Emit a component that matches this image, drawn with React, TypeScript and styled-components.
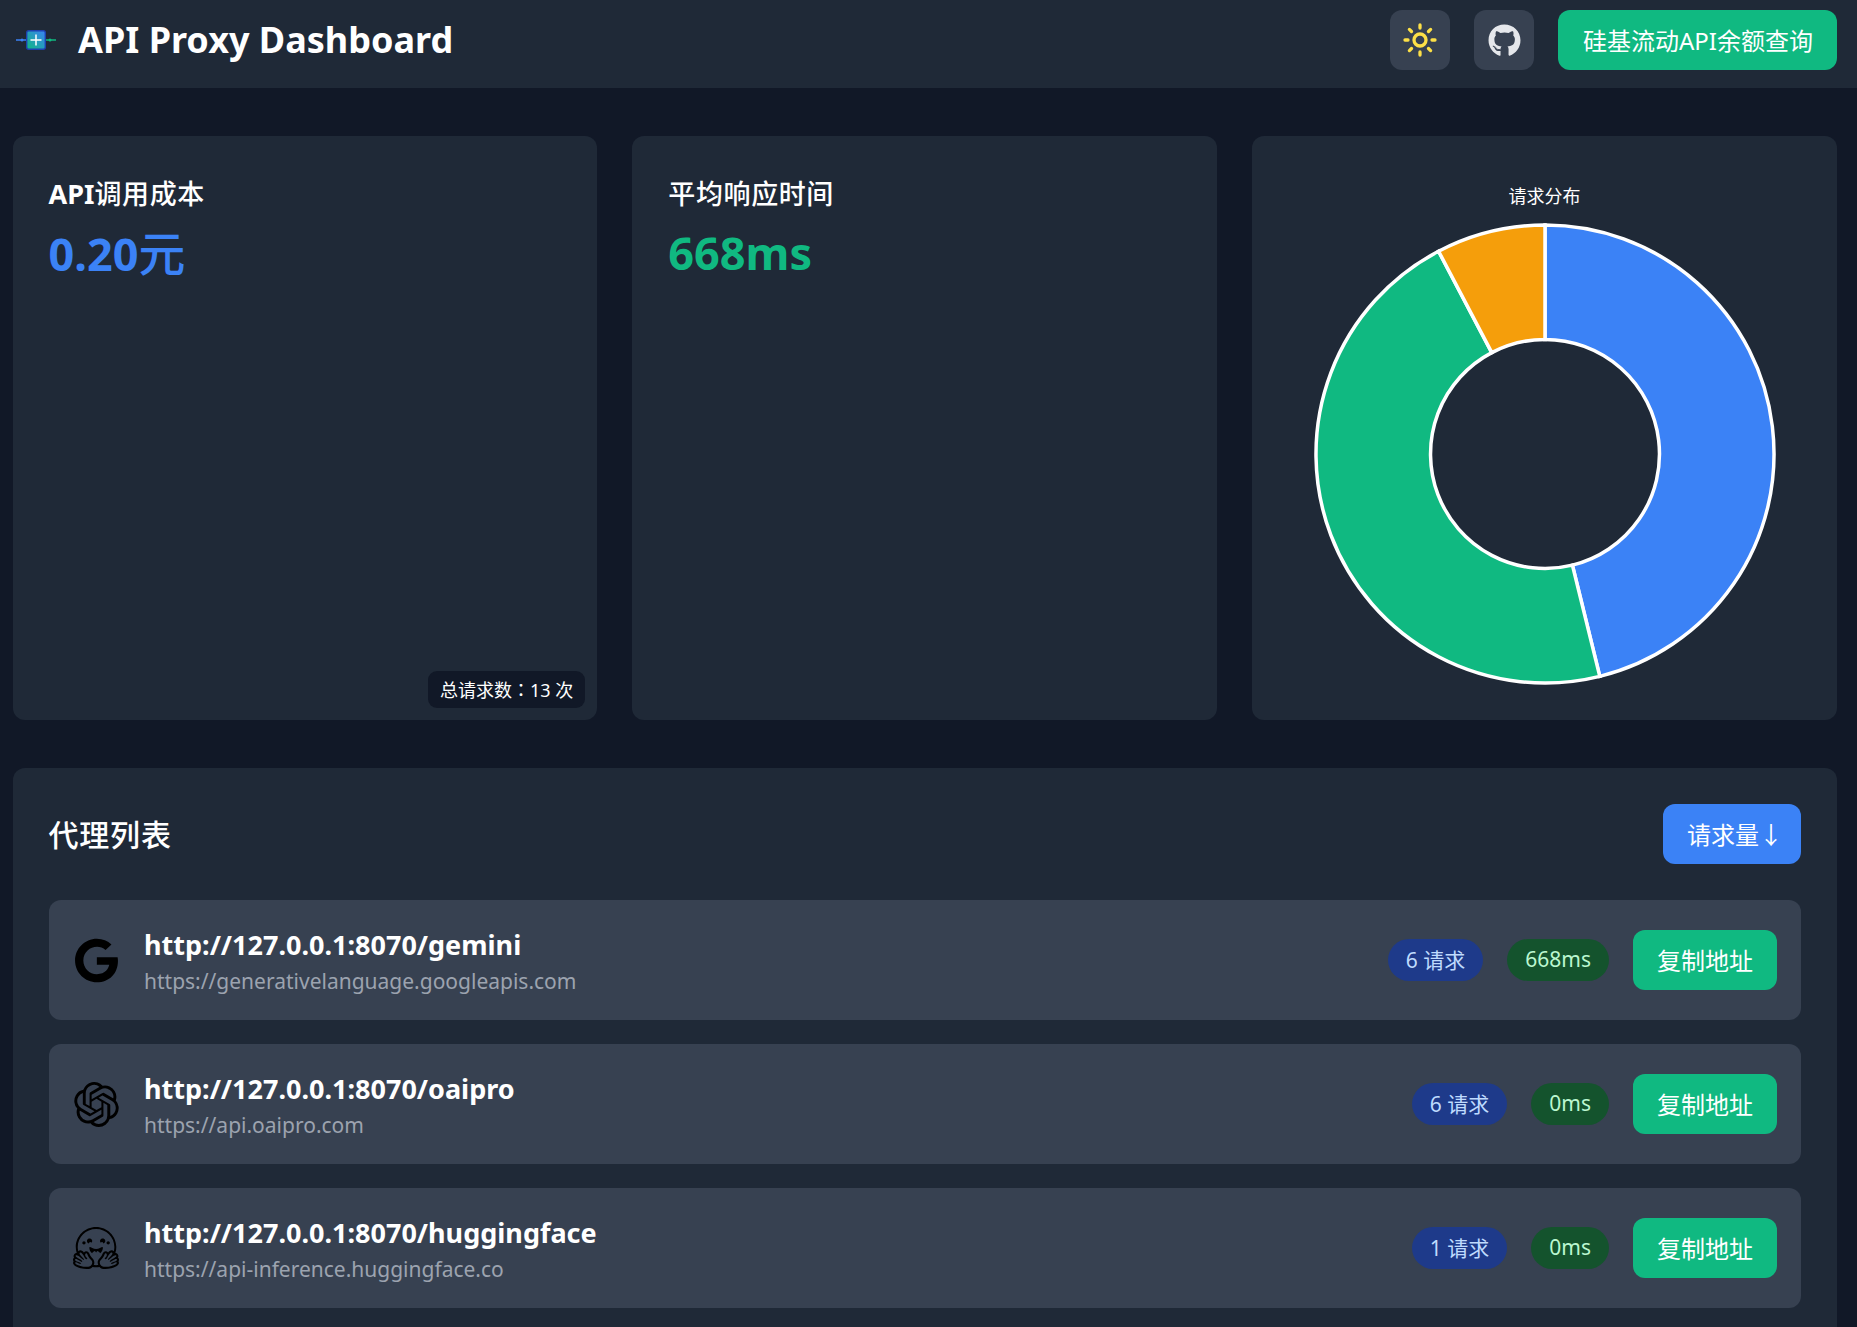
import { Sun } from 'lucide-react'
import { FaGithub, FaGoogle } from 'react-icons/fa'
import { SiHuggingface, SiOpenai } from 'react-icons/si'
import styled, { createGlobalStyle } from 'styled-components'
import type { ReactNode } from 'react'

const GlobalStyle = createGlobalStyle`
  html, body {
    margin: 0;
    height: 1327px;
    overflow: hidden;
    background: #111827;
    color: #fff;
    font-family: "Noto Sans", "Noto Sans CJK SC", sans-serif;
  }
  * { box-sizing: border-box; }
`

type Proxy = { path: string; target: string; requests: number; latency: string; icon: ReactNode }

const proxies: Proxy[] = [
  { path: 'http://127.0.0.1:8070/gemini', target: 'https://generativelanguage.googleapis.com', requests: 6, latency: '668ms', icon: <FaGoogle size={45} /> },
  { path: 'http://127.0.0.1:8070/oaipro', target: 'https://api.oaipro.com', requests: 6, latency: '0ms', icon: <SiOpenai size={45} /> },
  { path: 'http://127.0.0.1:8070/huggingface', target: 'https://api-inference.huggingface.co', requests: 1, latency: '0ms', icon: <SiHuggingface size={46} /> },
]

const slices = [
  { value: 6, color: '#3b82f6' },
  { value: 6, color: '#10b981' },
  { value: 1, color: '#f59e0b' },
]

const slicePath = (from: number, to: number) => {
  const point = (r: number, a: number) => `${(r * Math.sin(a)).toFixed(2)} ${(-r * Math.cos(a)).toFixed(2)}`
  const large = to - from > Math.PI ? 1 : 0
  return `M${point(229, from)} A229 229 0 ${large} 1 ${point(229, to)} L${point(114.5, to)} A114.5 114.5 0 ${large} 0 ${point(114.5, from)} Z`
}

const Donut = () => {
  const total = slices.reduce((sum, s) => sum + s.value, 0)
  let angle = 0
  return (
    <svg width="464" height="464" viewBox="-232 -232 464 464">
      {slices.map((s) => {
        const from = angle
        angle += (s.value / total) * Math.PI * 2
        return <path key={s.color} d={slicePath(from, angle)} fill={s.color} stroke="#fff" strokeWidth="3.5" />
      })}
    </svg>
  )
}

const Logo = () => (
  <svg width="48" height="48" viewBox="0 0 48 48">
    <defs>
      <linearGradient id="logoFill" x1="0" y1="1" x2="1" y2="0">
        <stop offset="0" stopColor="#10b981" />
        <stop offset="1" stopColor="#3b82f6" />
      </linearGradient>
    </defs>
    <path d="M4 24H14" stroke="#3b82f6" strokeWidth="1.5" />
    <path d="M34 24H44" stroke="#10b981" strokeWidth="1.5" />
    <circle cx="10" cy="24" r="1.5" fill="#3b82f6" />
    <circle cx="38" cy="24" r="1.5" fill="#10b981" />
    <rect x="14.7" y="14.7" width="18.6" height="18.6" rx="2" fill="url(#logoFill)" stroke="#1e40af" strokeWidth="1.4" />
    <path d="M24 18.5V29.5M18.5 24H29.5" stroke="#fff" strokeWidth="1.5" />
  </svg>
)

export default function App() {
  return (
    <>
      <GlobalStyle />
      <Header>
        <Brand>
          <Logo />
          <Title>API Proxy Dashboard</Title>
        </Brand>
        <HeaderActions>
          <IconButton>
            <Sun size={36} color="#fde047" strokeWidth={2.2} />
          </IconButton>
          <IconButton>
            <FaGithub size={33} color="#e5e7eb" />
          </IconButton>
          <BalanceButton>硅基流动API余额查询</BalanceButton>
        </HeaderActions>
      </Header>
      <Main>
        <Cards>
          <Card>
            <CardTitle>API<Cjk>调用成本</Cjk></CardTitle>
            <CardValue $color="#3b82f6">0.20<ValueUnit>元</ValueUnit></CardValue>
            <TotalTag>总请求数<Colon>：</Colon>13 次</TotalTag>
          </Card>
          <Card>
            <CardTitle><Cjk>平均响应时间</Cjk></CardTitle>
            <CardValue $color="#10b981">668ms</CardValue>
          </Card>
          <ChartCard>
            <ChartTitle>请求分布</ChartTitle>
            <Donut />
          </ChartCard>
        </Cards>
        <ListSection>
          <ListHeader>
            <ListTitle>代理列表</ListTitle>
            <SortButton>请求量<SortArrow>↓</SortArrow></SortButton>
          </ListHeader>
          <Rows>
            {proxies.map((p) => (
              <Row key={p.path}>
                <RowIcon>{p.icon}</RowIcon>
                <RowText>
                  <RowUrl>{p.path}</RowUrl>
                  <RowTarget>{p.target}</RowTarget>
                </RowText>
                <RowMeta>
                  <Badge $bg="#1e3a8a" $fg="#bfdbfe">{p.requests} 请求</Badge>
                  <Badge $bg="#14532d" $fg="#bbf7d0">{p.latency}</Badge>
                  <GreenButton>复制地址</GreenButton>
                </RowMeta>
              </Row>
            ))}
          </Rows>
        </ListSection>
      </Main>
    </>
  )
}

const Header = styled.header`
  height: 88px;
  padding: 0 20px 8px 12px;
  display: flex;
  align-items: center;
  justify-content: space-between;
  background-color: #1f2937;
`

const Brand = styled.div`
  display: flex;
  align-items: center;
  gap: 18px;
`

const Title = styled.h1`
  margin: 0;
  font-size: 36px;
  line-height: 54px;
  font-weight: 700;
`

const HeaderActions = styled.div`
  display: flex;
  align-items: center;
  gap: 24px;
`

const IconButton = styled.div`
  width: 60px;
  height: 60px;
  display: flex;
  align-items: center;
  justify-content: center;
  border-radius: 12px;
  background-color: #374151;
`

const GreenButton = styled.div`
  height: 60px;
  padding: 0 24px 2px;
  display: flex;
  align-items: center;
  border-radius: 12px;
  background-color: #10b981;
  font-size: 24px;
  white-space: nowrap;
`

const BalanceButton = styled(GreenButton)`
  padding-left: 25px;
`

const Main = styled.main`
  padding: 48px 20px 0 12.5px;
`

const Cards = styled.div`
  display: grid;
  grid-template-columns: repeat(3, 1fr);
  gap: 35px;
`

const Card = styled.section`
  position: relative;
  height: 584px;
  padding: 36px;
  border-radius: 12px;
  background-color: #1f2937;
`

const ChartCard = styled(Card)`
  padding: 48px 0 0;
  display: flex;
  flex-direction: column;
  align-items: center;
`

const ChartTitle = styled.div`
  font-size: 18px;
  line-height: 24px;
  margin-bottom: 14px;
`

const Cjk = styled.span`
  font-weight: 500;
  letter-spacing: 0.6px;
`

const ValueUnit = styled.span`
  font-weight: 500;
  font-size: 1.04em;
`

const Colon = styled.span`
  font-family: "Noto Sans CJK TC", sans-serif;
`

const CardTitle = styled.h2`
  margin: 0;
  font-size: 27px;
  line-height: 44px;
  font-weight: 700;
`

const CardValue = styled.div<{ $color: string }>`
  margin-top: 10px;
  font-size: 45px;
  line-height: 54px;
  font-weight: 700;
  color: ${(p) => p.$color};
`

const TotalTag = styled.div`
  position: absolute;
  right: 12px;
  bottom: 12px;
  padding: 6px 12px;
  border-radius: 9px;
  background-color: #111827;
  font-size: 18px;
  line-height: 24px;
`

const ListSection = styled.section`
  margin-top: 48px;
  padding: 36px;
  border-radius: 12px;
  background-color: #1f2937;
`

const ListHeader = styled.div`
  display: flex;
  align-items: center;
  justify-content: space-between;
  margin-bottom: 36px;
`

const ListTitle = styled.h2`
  margin: 0;
  font-size: 30px;
  line-height: 45px;
  font-weight: 500;
  letter-spacing: 0.8px;
`

const SortButton = styled.div`
  height: 60px;
  padding: 0 24px 2px;
  display: flex;
  align-items: center;
  border-radius: 12px;
  background-color: #3b82f6;
  font-size: 24px;
`

const SortArrow = styled.span`
  width: 18px;
  white-space: nowrap;
`

const Rows = styled.div`
  display: flex;
  flex-direction: column;
  gap: 24px;
`

const Row = styled.div`
  height: 120px;
  padding: 0 24px 0 23.5px;
  display: flex;
  align-items: center;
  border-radius: 12px;
  background-color: #374151;
`

const RowIcon = styled.div`
  width: 48px;
  height: 48px;
  margin-right: 24px;
  display: flex;
  align-items: center;
  justify-content: center;
  color: #000;
`

const RowText = styled.div`
  flex: 1;
  min-width: 0;
  padding-top: 1px;
`

const RowUrl = styled.div`
  font-size: 27px;
  line-height: 40px;
  font-weight: 700;
`

const RowTarget = styled.div`
  font-size: 21px;
  line-height: 32px;
  color: #9ca3af;
`

const RowMeta = styled.div`
  display: flex;
  align-items: center;
  gap: 24px;
`

const Badge = styled.span<{ $bg: string; $fg: string }>`
  height: 42px;
  padding: 0 18px 2px;
  display: flex;
  align-items: center;
  border-radius: 21px;
  font-size: 21px;
  background-color: ${(p) => p.$bg};
  color: ${(p) => p.$fg};
`
